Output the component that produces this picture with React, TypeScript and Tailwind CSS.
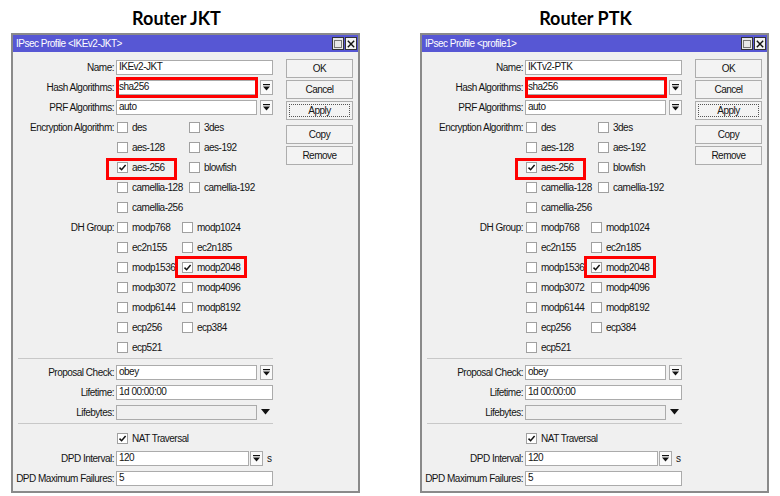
import type { ReactNode } from 'react'

type Mark = { left: number; top: number; width: number; height: number }

type ProfileProps = {
  heading: string
  title: string
  name: string
}

const font = "font-['Liberation_Sans',Arial,sans-serif] text-[10px] tracking-[-0.5px] text-[#141414]"

const encryption = [
  ['des', '3des'],
  ['aes-128', 'aes-192'],
  ['aes-256', 'blowfish'],
  ['camellia-128', 'camellia-192'],
  ['camellia-256'],
]

const dhGroups = [
  ['modp768', 'modp1024'],
  ['ec2n155', 'ec2n185'],
  ['modp1536', 'modp2048'],
  ['modp3072', 'modp4096'],
  ['modp6144', 'modp8192'],
  ['ecp256', 'ecp384'],
  ['ecp521'],
]

const checked = new Set(['aes-256', 'modp2048'])

const marks: Record<string, Mark> = {
  'aes-256': { left: -11, top: -2, width: 71, height: 22 },
  modp2048: { left: -7, top: -4, width: 72, height: 22 },
}

function RedBox({ m }: { m: Mark }) {
  return (
    <span
      className="pointer-events-none absolute border-[3px] border-[#ff0000]"
      style={{ left: m.left, top: m.top, width: m.width, height: m.height }}
    />
  )
}

function Row({ label, children }: { label?: string; children: ReactNode }) {
  return (
    <div className="flex h-[20px] items-center">
      <div className="w-[101px] shrink-0 whitespace-nowrap text-right">{label ? `${label}:` : ''}</div>
      <div className="relative ml-[2px] flex h-full w-[157px] items-center">{children}</div>
    </div>
  )
}

function Field({ value, className = 'flex-1' }: { value: string; className?: string }) {
  return (
    <div className={`flex h-[15px] items-center border border-[#ababab] bg-white px-[2px] leading-none ${className}`}>
      {value}
    </div>
  )
}

function DropIcon() {
  return (
    <svg width="7" height="7" viewBox="0 0 7 7">
      <rect x="0" y="0" width="7" height="1.2" fill="#111" />
      <path d="M0 2.4 H7 L3.5 6.6 Z" fill="#111" />
    </svg>
  )
}

function DropButton() {
  return (
    <div className="flex h-[15px] w-[13px] shrink-0 items-center justify-center border border-[#ababab] bg-[#fafafa]">
      <DropIcon />
    </div>
  )
}

function Tick() {
  return (
    <svg width="9" height="9" viewBox="0 0 9 9" className="block">
      <path d="M1.5 4.6 L3.6 6.7 L7.6 2" fill="none" stroke="#111" strokeWidth="1.5" />
    </svg>
  )
}

function CheckItem({ label, on, width }: { label: string; on: boolean; width?: number }) {
  return (
    <div className="relative flex items-center" style={width ? { width } : undefined}>
      <div className="flex h-[11px] w-[11px] shrink-0 items-center justify-center border border-[#a0a0a0] bg-white">
        {on && <Tick />}
      </div>
      <span className="ml-[4px] whitespace-nowrap">{label}</span>
    </div>
  )
}

function CheckRow({ label, items, col }: { label?: string; items: string[]; col: number }) {
  return (
    <Row label={label}>
      <div className="ml-px flex">
        {items.map((it, i) => (
          <div key={it} className="relative">
            <CheckItem label={it} on={checked.has(it)} width={i === 0 ? col : undefined} />
            {marks[it] && <RedBox m={marks[it]} />}
          </div>
        ))}
      </div>
    </Row>
  )
}

function Button({ children, focus }: { children: ReactNode; focus?: boolean }) {
  return (
    <div className="flex h-[19px] w-[67px] items-center justify-center border border-[#adadad] bg-[#f3f3f3] p-[2px]">
      <div
        className={`flex h-full w-full items-center justify-center ${focus ? 'border border-dotted border-[#555]' : ''}`}
      >
        {children}
      </div>
    </div>
  )
}

function Profile({ heading, title, name }: ProfileProps) {
  return (
    <div className="flex flex-col">
      <div className="h-[33px] w-[349px] pr-[18px] pt-[7px] text-center font-['Lato',sans-serif] text-[18px] font-bold leading-[22px] text-black">
        {heading}
      </div>

      <div className={`w-[349px] border-2 border-[#8a8a8a] bg-[#f0f0f0] ${font}`}>
        <div className="flex h-[17px] items-center bg-[#5757d4] pl-[3px] pr-px text-white">
          <span className="flex-1">{title}</span>
          <div className="flex gap-px">
            <div className="flex h-[13px] w-[12px] items-center justify-center border border-[#333] bg-[#e8e8e8]">
              <div className="h-[8px] w-[8px] border border-[#777]" />
            </div>
            <div className="flex h-[13px] w-[12px] items-center justify-center border border-[#333] bg-[#f4f4f4]">
              <svg width="8" height="8" viewBox="0 0 8 8">
                <path d="M0.8 0.8 L7.2 7.2 M7.2 0.8 L0.8 7.2" stroke="#111" strokeWidth="1.4" />
              </svg>
            </div>
          </div>
        </div>

        <div className="flex pt-[5px]">
          <div className="w-[260px]">
            <Row label="Name">
              <Field value={name} />
            </Row>
            <Row label="Hash Algorithms">
              <Field value="sha256" />
              <span className="w-[3px]" />
              <DropButton />
              <RedBox m={{ left: 0, top: 0, width: 142, height: 21 }} />
            </Row>
            <Row label="PRF Algorithms">
              <Field value="auto" />
              <span className="w-[3px]" />
              <DropButton />
            </Row>
            {encryption.map((items, i) => (
              <CheckRow key={items[0]} label={i === 0 ? 'Encryption Algorithm' : undefined} items={items} col={72} />
            ))}
            {dhGroups.map((items, i) => (
              <CheckRow key={items[0]} label={i === 0 ? 'DH Group' : undefined} items={items} col={65} />
            ))}

            <div className="mb-[3px] ml-[5px] mt-px h-px w-[255px] bg-[#c8c8c8]" />

            <Row label="Proposal Check">
              <Field value="obey" />
              <span className="w-[3px]" />
              <DropButton />
            </Row>
            <Row label="Lifetime">
              <Field value="1d 00:00:00" />
            </Row>
            <Row label="Lifebytes">
              <div className="h-[15px] flex-1 border border-[#ababab] bg-[#f0f0f0]" />
              <div className="flex w-[16px] justify-center">
                <svg width="9" height="6" viewBox="0 0 9 6">
                  <path d="M0 0 H9 L4.5 5.5 Z" fill="#111" />
                </svg>
              </div>
            </Row>

            <div className="mb-[4px] ml-[5px] mt-px h-px w-[255px] bg-[#c8c8c8]" />

            <Row>
              <div className="ml-px">
                <CheckItem label="NAT Traversal" on />
              </div>
            </Row>
            <Row label="DPD Interval">
              <Field value="120" className="w-[133px]" />
              <span className="w-px" />
              <DropButton />
              <span className="ml-[4px]">s</span>
            </Row>
            <Row label="DPD Maximum Failures">
              <Field value="5" />
            </Row>
            <div className="h-[3px]" />
          </div>

          <div className="ml-[13px] mt-[2px] flex flex-col gap-[2px]">
            <Button>OK</Button>
            <Button>Cancel</Button>
            <Button focus>Apply</Button>
            <div className="mt-[3px]">
              <Button>Copy</Button>
            </div>
            <Button>Remove</Button>
          </div>
        </div>
      </div>
    </div>
  )
}

export default function App() {
  return (
    <div className="flex h-[496px] w-[780px] gap-[60px] overflow-hidden bg-white pl-[11px]">
      <Profile heading="Router JKT" title="IPsec Profile <IKEv2-JKT>" name="IKEv2-JKT" />
      <Profile heading="Router PTK" title="IPsec Profile <profile1>" name="IKTv2-PTK" />
    </div>
  )
}
